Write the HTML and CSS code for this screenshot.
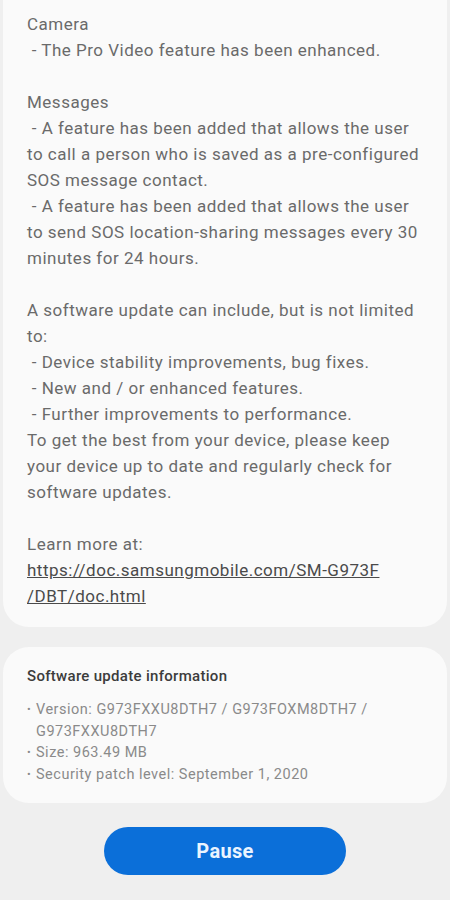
FILE: index.html
```html
<!DOCTYPE html>
<html>
<head>
<meta charset="utf-8">
<link rel="stylesheet" href="styles.css">
</head>
<body>
<div class="screen">
  <section class="card notes">
    <p>Camera<br>&nbsp;- The Pro Video feature has been enhanced.</p>
    <p>Messages<br>&nbsp;- A feature has been added that allows the user to call a person who is saved as a pre-configured SOS message contact.<br>&nbsp;- A feature has been added that allows the user to send SOS location-sharing messages every 30 minutes for 24 hours.</p>
    <p>A software update can include, but is not limited to:<br>&nbsp;- Device stability improvements, bug fixes.<br>&nbsp;- New and / or enhanced features.<br>&nbsp;- Further improvements to performance.<br>To get the best from your device, please keep your device up to date and regularly check for software updates.</p>
    <p>Learn more at:<br><a class="link" href="#">https://doc.samsungmobile.com/SM-G973F<br>/DBT/doc.html</a></p>
  </section>
  <section class="card info">
    <h2 class="info-title">Software update information</h2>
    <ul class="info-list">
      <li>Version: G973FXXU8DTH7 / G973FOXM8DTH7 / G973FXXU8DTH7</li>
      <li>Size: 963.49 MB</li>
      <li>Security patch level: September 1, 2020</li>
    </ul>
  </section>
  <div class="actions">
    <button class="pause">Pause</button>
  </div>
</div>
</body>
</html>
```

FILE: styles.css
```css
html, body {
  margin: 0;
  padding: 0;
  background: #efefef;
}
body {
  font-family: Roboto, "Noto Sans", sans-serif;
}
.screen {
  width: 450px;
  height: 900px;
  overflow: hidden;
  display: flex;
  flex-direction: column;
}
.card {
  background: #fafafa;
  margin: 0 3px;
  border-radius: 26px;
}
.notes {
  border-top-left-radius: 0;
  border-top-right-radius: 0;
  padding: 11px 22px 18px 24px;
  color: #6a6a6a;
  font-size: 17px;
  letter-spacing: 0.5px;
  line-height: 26px;
}
.notes p {
  margin: 0 0 26px 0;
}
.notes p:last-child {
  margin-bottom: 0;
}
.link {
  color: #4a4a4a;
  text-decoration: underline;
}
.info {
  margin-top: 20px;
  padding: 18px 24px 17px 24px;
}
.info-title {
  margin: 0 0 12px 0;
  font-size: 15px;
  font-weight: 500;
  letter-spacing: 0.3px;
  color: #3c3c3c;
  line-height: 22px;
}
.info-list {
  list-style: none;
  margin: 0;
  padding: 0;
  color: #8a8a8a;
  font-size: 14.5px;
  letter-spacing: 0.5px;
  line-height: 21.7px;
}
.info-list li {
  position: relative;
  padding-left: 9px;
}
.info-list li::before {
  content: "\2022";
  position: absolute;
  left: 0;
  font-size: 11px;
}
.actions {
  display: flex;
  justify-content: center;
  margin-top: 24px;
}
.pause {
  width: 242px;
  height: 48px;
  border: none;
  border-radius: 24px;
  background: #0b6fd9;
  color: #eaf4ff;
  font-family: Roboto, "Noto Sans", sans-serif;
  font-size: 20px;
  font-weight: 700;
  letter-spacing: 0.3px;
}
```
